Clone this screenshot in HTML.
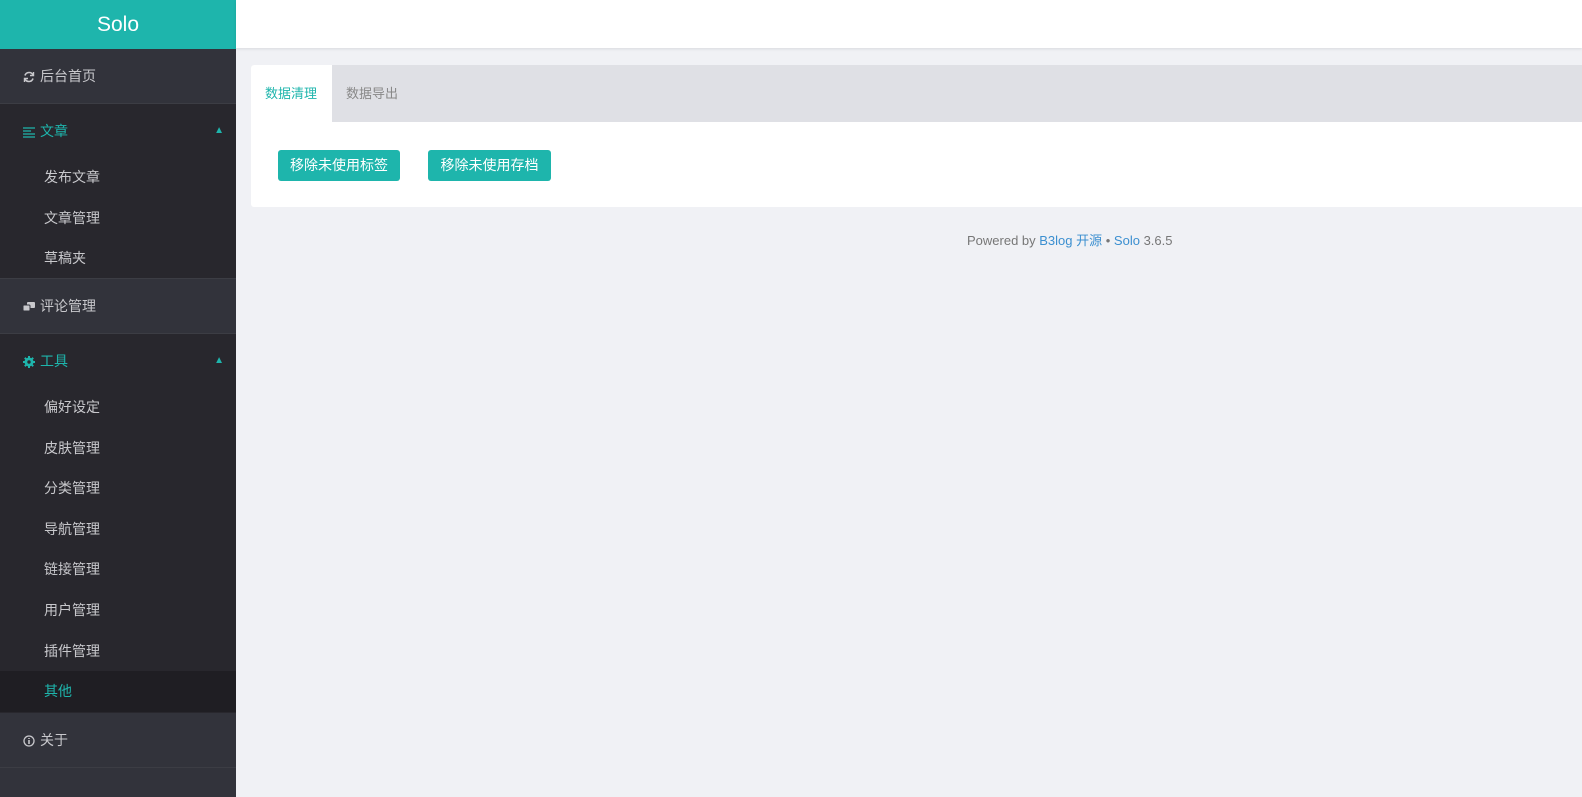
<!DOCTYPE html>
<html><head><meta charset="utf-8"><style>
*{margin:0;padding:0;box-sizing:border-box}
body{width:1582px;height:797px;overflow:hidden;background:#f0f1f5;font-family:"Liberation Sans","Noto Sans CJK SC",sans-serif;font-size:14px;position:relative}
.side{position:absolute;left:0;top:0;width:236px;height:797px;background:#32333b}
.logo{height:49px;background:#1eb5ac;color:#fff;font-size:21px;text-align:center;line-height:50px}
.top{height:55px;line-height:54px;padding-left:23px;color:#c8c8cc;border-bottom:1px solid #3c3d44;position:relative}
.top svg{vertical-align:-2px;margin-right:5px}
.grp{background:#28272d;border-bottom:1px solid #3c3d44}
.grp .hd{height:53px;line-height:54px;padding-left:23px;color:#1eb5ac;position:relative}
.grp .hd svg{vertical-align:-2px;margin-right:5px}
.car{position:absolute;right:12px;top:0;font-size:10px;color:#1eb5ac}
.sub{height:40.6px;line-height:40px;padding-left:44px;color:#c8c8cc}
.sub.on{background:#1f1e23;color:#1eb5ac}
.hdr{position:absolute;left:236px;top:0;right:0;height:48px;background:#fff;box-shadow:0 1px 3px rgba(0,0,0,.1)}
.card{position:absolute;left:251px;top:65px;right:0;height:142px;background:#fff;border-radius:3px 0 0 3px;overflow:hidden}
.tabs{height:57px;background:#dfe0e5}
.tab{float:left;height:57px;line-height:57px;padding:0 14px;color:#888;font-size:13px}
.tab.on{background:#fff;color:#1eb5ac;width:81px}
.btn{position:absolute;top:85px;height:31px;line-height:31px;background:#1eb5ac;color:#fff;border-radius:3px;font-size:14px;text-align:center}
.foot{position:absolute;left:967px;top:230px;color:#777;font-size:13px;white-space:nowrap}
.foot a{color:#3b8fd0;text-decoration:none}
</style></head><body>
<div class="side">
<div class="logo">Solo</div>
<div class="top" style="height:55px"><svg width="12" height="12" viewBox="0 0 12 12"><path d="M10 4A4.3 4.3 0 0 0 2 4.5M2 8A4.3 4.3 0 0 0 10 7.5" stroke="#c8c8cc" stroke-width="1.6" fill="none"/><path d="M10.5 1v3.5H7M1.5 11V7.5H5" stroke="#c8c8cc" stroke-width="1.4" fill="none"/></svg>后台首页</div>
<div class="grp" style="height:175px">
<div class="hd"><svg width="12" height="12" viewBox="0 0 12 12"><path d="M0 2h12M0 5h8M0 8h12M0 11h12" stroke="#1eb5ac" stroke-width="1.2"/></svg>文章<span class="car">▲</span></div>
<div class="sub">发布文章</div><div class="sub">文章管理</div><div class="sub">草稿夹</div>
</div>
<div class="top"><svg width="12" height="12" viewBox="0 0 12 12"><rect x="4" y="1" width="8" height="6" rx="1" fill="#c8c8cc"/><rect x="0" y="4" width="7" height="6" rx="1" fill="#c8c8cc" stroke="#32333b"/></svg>评论管理</div>
<div class="grp" style="height:379px;border-bottom:none">
<div class="hd"><svg width="12" height="12" viewBox="0 0 12 12"><circle cx="6" cy="6" r="4.5" fill="#1eb5ac"/><path d="M6 0v12M0 6h12M1.8 1.8l8.4 8.4M10.2 1.8l-8.4 8.4" stroke="#1eb5ac" stroke-width="2"/><circle cx="6" cy="6" r="1.7" fill="#28272d"/></svg>工具<span class="car">▲</span></div>
<div class="sub">偏好设定</div><div class="sub">皮肤管理</div><div class="sub">分类管理</div><div class="sub">导航管理</div><div class="sub">链接管理</div><div class="sub">用户管理</div><div class="sub">插件管理</div><div class="sub on">其他</div>
</div>
<div class="top"><svg width="12" height="12" viewBox="0 0 12 12"><circle cx="6" cy="6" r="5" stroke="#c8c8cc" stroke-width="1.3" fill="none"/><path d="M6 5v4M6 3v1" stroke="#c8c8cc" stroke-width="1.6"/></svg>关于</div>
</div>
<div class="hdr"></div>
<div class="card">
<div class="tabs"><div class="tab on">数据清理</div><div class="tab">数据导出</div></div>
<div class="btn" style="left:27px;width:122px">移除未使用标签</div>
<div class="btn" style="left:177px;width:123px">移除未使用存档</div>
</div>
<div class="foot">Powered by <a>B3log 开源</a> • <a>Solo</a> 3.6.5</div>
</body></html>
